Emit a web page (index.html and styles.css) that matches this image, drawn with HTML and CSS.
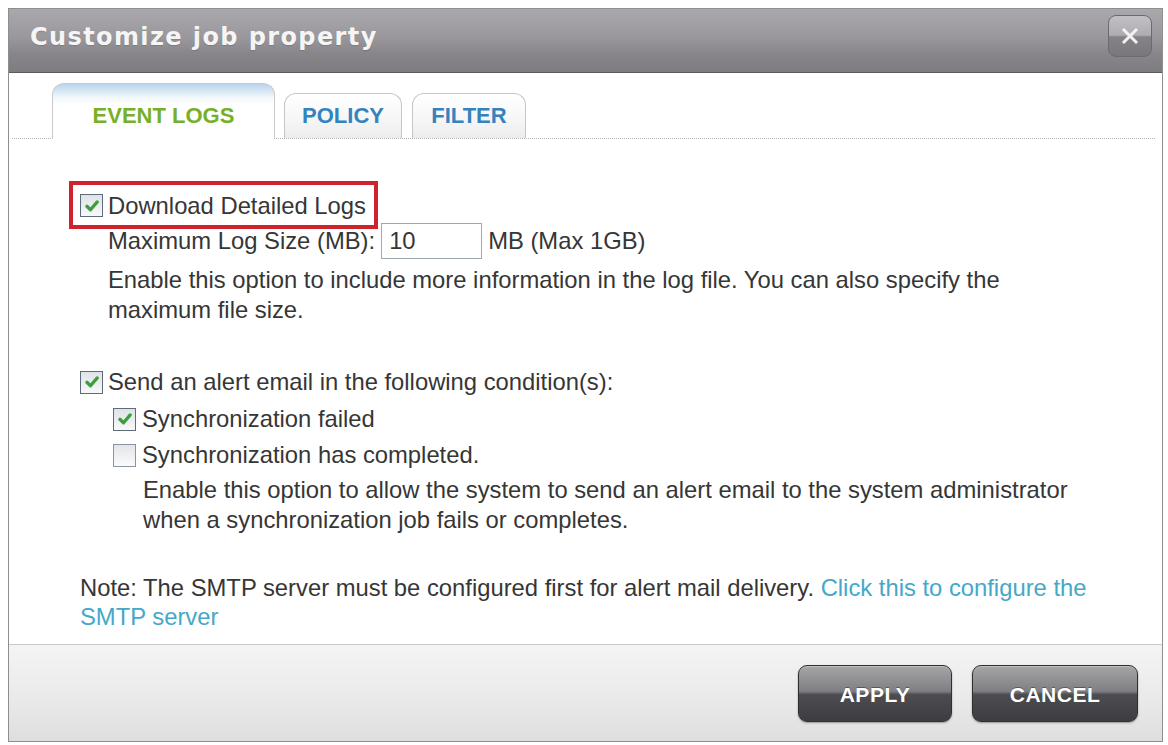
FILE: index.html
```html
<!DOCTYPE html>
<html lang="en">
<head>
    <meta charset="UTF-8">
    <meta name="viewport" content="width=device-width, initial-scale=1.0">
    <title>Customize job property</title>
    <link rel="stylesheet" href="styles.css">
</head>
<body>
    <div class="dialog">
        <div class="titlebar">
            <h1>Customize job property</h1>
            <button class="close-btn" aria-label="Close">
                <svg width="20" height="20" viewBox="0 0 20 20">
                    <path d="M3 3 L17 17 M17 3 L3 17" />
                </svg>
            </button>
        </div>

        <div class="dialog-body">
            <div class="tabs">
                <div class="tab active">EVENT LOGS</div>
                <div class="tab">POLICY</div>
                <div class="tab">FILTER</div>
            </div>

            <div class="content">
                <label class="option highlight">
                    <span class="cb checked"><svg viewBox="0 0 12 12"><path d="M2.6 6.2 L5 8.5 L9.5 3.3" /></svg></span>
                    Download Detailed Logs
                </label>
                <div class="field">
                    <span>Maximum Log Size (MB):</span>
                    <input type="text" value="10">
                    <span>MB (Max 1GB)</span>
                </div>
                <p class="help">Enable this option to include more information in the log file. You can also specify the maximum file size.</p>

                <label class="option section">
                    <span class="cb checked"><svg viewBox="0 0 12 12"><path d="M2.6 6.2 L5 8.5 L9.5 3.3" /></svg></span>
                    Send an alert email in the following condition(s):
                </label>
                <label class="option sub">
                    <span class="cb checked"><svg viewBox="0 0 12 12"><path d="M2.6 6.2 L5 8.5 L9.5 3.3" /></svg></span>
                    Synchronization failed
                </label>
                <label class="option sub">
                    <span class="cb"></span>
                    Synchronization has completed.
                </label>
                <p class="help help-sub">Enable this option to allow the system to send an alert email to the system administrator when a synchronization job fails or completes.</p>

                <p class="note">Note: The SMTP server must be configured first for alert mail delivery. <a href="#">Click this to configure the SMTP server</a></p>
            </div>
        </div>

        <div class="footer">
            <button class="btn btn-apply">APPLY</button>
            <button class="btn btn-cancel">CANCEL</button>
        </div>
    </div>
</body>
</html>
```

FILE: styles.css
```css
:root {
    --text: #363636;
    --link: #45a8c8;
    --tab-green: #76b027;
    --tab-blue: #3483bf;
    --highlight: #d0222c;
}

body {
    margin: 0;
    padding: 8px 0 0 8px;
    background: #fff;
    font-family: "Liberation Sans", Arial, sans-serif;
    color: var(--text);
}

.dialog {
    width: 1155px;
    height: 734px;
    box-sizing: border-box;
    border: 1px solid #8e8e8e;
    display: flex;
    flex-direction: column;
    background: #fff;
}

/* title bar */
.titlebar {
    height: 63px;
    flex-shrink: 0;
    display: flex;
    justify-content: space-between;
    align-items: flex-start;
    background: linear-gradient(#aaa8ad 0%, #9a989d 45%, #88868b 70%, #7e7c81 100%);
    border-bottom: 1px solid #5c5a5f;
}

.titlebar h1 {
    margin: 0;
    padding-left: 21px;
    font-family: "DejaVu Sans", Verdana, sans-serif;
    font-size: 24px;
    font-weight: bold;
    letter-spacing: 1.4px;
    line-height: 56px;
    color: #f5f5f5;
    text-shadow: 0 1px 1px rgba(0,0,0,0.15);
}

.close-btn {
    width: 44px;
    height: 42px;
    margin: 6px 10px 0 0;
    padding: 0;
    border: 1px solid #6c6a6f;
    border-radius: 8px;
    background: linear-gradient(#c2c0c5 0%, #aeacb1 48%, #858388 52%, #79777c 100%);
    display: flex;
    align-items: center;
    justify-content: center;
    cursor: pointer;
}

.close-btn svg path {
    stroke: #f2f2f2;
    stroke-width: 3;
    fill: none;
}

/* tabs */
.dialog-body {
    flex: 1;
    display: flex;
    flex-direction: column;
}

.tabs {
    height: 65px;
    display: flex;
    align-items: flex-end;
    gap: 10px;
    margin: 0 7px 0 3px;
    padding-left: 40px;
    border-bottom: 1px dotted #b4b4b4;
}

.tab {
    box-sizing: border-box;
    height: 45px;
    display: flex;
    align-items: center;
    justify-content: center;
    border: 1px solid #c6c6c6;
    border-bottom: none;
    border-radius: 12px 12px 0 0;
    background: linear-gradient(#ffffff 0%, #f6f6f6 60%, #ececec 100%);
    font-size: 22px;
    font-weight: bold;
    color: var(--tab-blue);
    width: 118px;
}

.tab + .tab + .tab {
    width: 114px;
}

.tab.active {
    width: 223px;
    height: 56px;
    margin-bottom: -1px;
    padding-top: 8px;
    margin-right: -1px;
    color: var(--tab-green);
    background: linear-gradient(#b9d4ec 0%, #d6e7f5 7px, #f4f9fd 14px, #fff 22px);
    border-color: #cacaca;
}

/* content */
.content {
    padding: 42px 0 0 71px;
    font-size: 23.8px;
}

.option {
    display: flex;
    align-items: center;
    gap: 5px;
    height: 38px;
    box-sizing: border-box;
}

.highlight {
    width: fit-content;
    height: 48px;
    margin-left: -11px;
    padding: 1px 8px 0 7px;
    border: 4px solid var(--highlight);
}

.cb {
    width: 23px;
    height: 23px;
    box-sizing: border-box;
    flex-shrink: 0;
    border: 1px solid #8a95a2;
    background: linear-gradient(#e3e5e8, #fbfbfb);
    display: inline-flex;
    align-items: center;
    justify-content: center;
}

.cb.checked {
    border-color: #5e6b7a;
    background: linear-gradient(#dfe3e7, #f7f8f9);
}

.cb svg {
    width: 18px;
    height: 18px;
}

.cb svg path {
    fill: none;
    stroke: #3c9f3a;
    stroke-width: 2.2;
    stroke-linecap: round;
    stroke-linejoin: round;
}

.field {
    display: flex;
    align-items: center;
    gap: 6px;
    height: 36px;
    margin-top: -6px;
    padding-left: 28px;
}

.field input {
    width: 101px;
    height: 36px;
    box-sizing: border-box;
    border: 1px solid #9fa8b2;
    padding: 0 7px;
    font: inherit;
    color: var(--text);
}

.help {
    margin: 6px 0 0;
    padding-left: 28px;
    line-height: 30px;
    max-width: 960px;
}

.section {
    margin-top: 38px;
}

.sub {
    height: 36px;
    padding-left: 33px;
    gap: 6px;
}

.help-sub {
    margin-top: 2px;
    padding-left: 63px;
    max-width: 945px;
}

.note {
    margin: 38px 0 0;
    line-height: 29px;
    max-width: 1040px;
}

.note a {
    color: var(--link);
    text-decoration: none;
}

/* footer */
.footer {
    height: 96px;
    flex-shrink: 0;
    display: flex;
    justify-content: flex-end;
    align-items: center;
    gap: 20px;
    padding-right: 24px;
    border-top: 1px solid #cbcbcb;
    background: linear-gradient(#f4f4f4 0%, #e9e9e9 60%, #dedede 100%);
}

.btn {
    height: 57px;
    padding: 3px 0 0;
    border: 1px solid #2f2f32;
    border-radius: 9px;
    background: linear-gradient(#a5a5a8 0%, #7f7f83 46%, #4d4d51 52%, #3d3d41 100%);
    box-shadow: 0 1px 2px rgba(0,0,0,0.35), inset 0 1px 0 rgba(255,255,255,0.3);
    color: #fff;
    font-family: "Liberation Sans", Arial, sans-serif;
    font-size: 21px;
    font-weight: bold;
    letter-spacing: 0.5px;
    text-shadow: 0 -1px 0 rgba(0,0,0,0.35);
    cursor: pointer;
}

.btn-apply {
    width: 154px;
}

.btn-cancel {
    width: 166px;
}
```
